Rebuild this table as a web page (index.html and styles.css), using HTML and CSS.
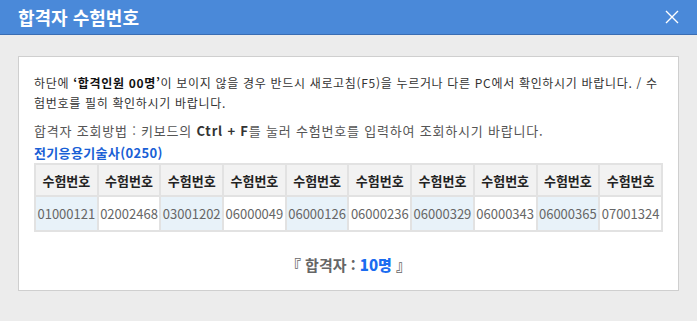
FILE: index.html
```html
<!DOCTYPE html>
<html lang="ko">
<head>
  <meta charset="UTF-8" />
  <meta name="viewport" content="width=device-width, initial-scale=1.0">
  <title>합격자 수험번호</title>
  <link rel="stylesheet" href="styles.css">
</head>
<body>
  <div class="popup-head">
    <h1>합격자 수험번호</h1>
    <span class="close" title="닫기">
      <svg width="14" height="14" viewBox="0 0 14 14">
        <path d="M1 1 L13 13 M13 1 L1 13" stroke="#fff" stroke-width="1.4" fill="none" />
      </svg>
    </span>
  </div>

  <div class="popup-body">
    <div class="box">
      <p class="notice">하단에 <b>‘합격인원 00명’</b>이 보이지 않을 경우 반드시 새로고침(F5)을 누르거나 다른 PC에서 확인하시기 바랍니다. / 수험번호를 필히 확인하시기 바랍니다.</p>
      <p class="howto">합격자 조회방법 : 키보드의 <b>Ctrl + F</b>를 눌러 수험번호를 입력하여 조회하시기 바랍니다.</p>
      <p class="exam-name">전기응용기술사(0250)</p>

      <table class="pass-list">
        <thead>
          <tr>
            <th>수험번호</th><th>수험번호</th><th>수험번호</th><th>수험번호</th><th>수험번호</th>
            <th>수험번호</th><th>수험번호</th><th>수험번호</th><th>수험번호</th><th>수험번호</th>
          </tr>
        </thead>
        <tbody>
          <tr>
            <td class="odd">01000121</td><td>02002468</td><td class="odd">03001202</td><td>06000049</td><td class="odd">06000126</td>
            <td>06000236</td><td class="odd">06000329</td><td>06000343</td><td class="odd">06000365</td><td>07001324</td>
          </tr>
        </tbody>
      </table>

      <p class="total">『 합격자 : <strong>10명</strong> 』</p>
    </div>
  </div>
</body>
</html>
```

FILE: styles.css
```css
body {
  margin: 0;
  padding: 0;
  background-color: #ececec;
  font-family: "Noto Sans CJK KR", "Noto Sans", sans-serif;
  color: #333;
}

.popup-head {
  display: flex;
  justify-content: space-between;
  align-items: center;
  height: 34px;
  padding: 0 18px;
  background-color: #4a89d9;
  border-bottom: 1px solid #3a6db3;
}

.popup-head h1 {
  margin: 0;
  font-size: 18px;
  font-weight: bold;
  color: #fff;
  line-height: 34px;
}

.close {
  display: flex;
  cursor: pointer;
}

.popup-body {
  padding: 21px 18px 0 18px;
  width: 661px;
}

.box {
  background: #fff;
  border: 1px solid #cfcfcf;
  padding: 16px 15px 13px 15px;
}

.box p {
  margin: 0;
}

.notice {
  font-size: 12px;
  line-height: 20px;
  letter-spacing: 0.68px;
  color: #333;
}

.notice b {
  color: #111;
}

.howto {
  margin-top: 8px !important;
  font-size: 13px;
  line-height: 20px;
  letter-spacing: 0.8px;
  color: #555;
}

.howto b {
  color: #333;
}

.exam-name {
  margin-top: 2px !important;
  font-size: 13px;
  font-weight: bold;
  line-height: 20px;
  letter-spacing: 0.35px;
  color: #1a5fd6;
}

.pass-list {
  width: 629px;
  border-collapse: collapse;
  table-layout: fixed;
}

.pass-list th,
.pass-list td {
  border: 2px solid #e2e2e2;
  padding: 0;
  text-align: center;
  font-size: 13px;
}

.pass-list th {
  height: 30px;
  background: #f2f2f2;
  color: #222;
  font-weight: bold;
}

.pass-list td {
  height: 33px;
  color: #666;
  background: #fff;
}

.pass-list td.odd {
  background: #e8f2f9;
}

.total {
  margin-top: 21px !important;
  text-align: center;
  font-size: 15px;
  font-weight: bold;
  line-height: 24px;
  color: #666;
}

.total strong {
  color: #1a6cf0;
}
```
